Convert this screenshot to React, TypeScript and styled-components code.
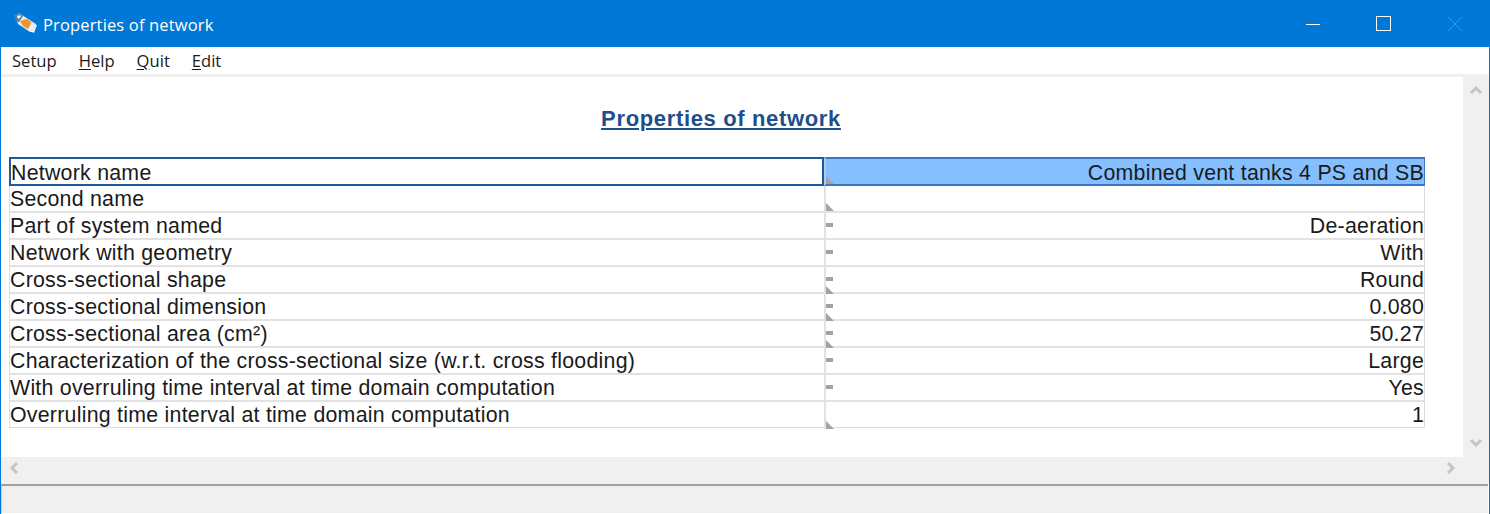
import React from 'react';
import styled, { createGlobalStyle } from 'styled-components';

type Marker = 'triangle' | 'dash' | 'both';

interface PropertyRow {
  label: string;
  value: string;
  marker: Marker;
}

const rows: PropertyRow[] = [
  { label: 'Network name', value: 'Combined vent tanks 4 PS and SB', marker: 'triangle' },
  { label: 'Second name', value: '', marker: 'triangle' },
  { label: 'Part of system named', value: 'De-aeration', marker: 'dash' },
  { label: 'Network with geometry', value: 'With', marker: 'dash' },
  { label: 'Cross-sectional shape', value: 'Round', marker: 'both' },
  { label: 'Cross-sectional dimension', value: '0.080', marker: 'both' },
  { label: 'Cross-sectional area (cm²)', value: '50.27', marker: 'both' },
  { label: 'Characterization of the cross-sectional size (w.r.t. cross flooding)', value: 'Large', marker: 'dash' },
  { label: 'With overruling time interval at time domain computation', value: 'Yes', marker: 'dash' },
  { label: 'Overruling time interval at time domain computation', value: '1', marker: 'triangle' },
];

const GlobalStyle = createGlobalStyle`
  html, body {
    margin: 0;
    padding: 0;
    background: #ffffff;
    overflow: hidden;
  }
`;

const Window = styled.div`
  width: 1490px;
  height: 514px;
  box-sizing: border-box;
  display: flex;
  flex-direction: column;
  border-left: 1px solid #0078d7;
  border-right: 1px solid #0078d7;
  font-family: "Open Sans", "Noto Sans", sans-serif;
`;

const TitleBar = styled.div`
  height: 47px;
  flex: none;
  margin: 0 -1px;
  background: #0078d7;
  display: flex;
  align-items: center;
  color: #ffffff;
`;

const AppIcon = styled.svg`
  width: 25px;
  height: 22px;
  margin-left: 13px;
  margin-top: -2px;
  flex: none;
`;

const WindowTitle = styled.div`
  margin-left: 5px;
  margin-top: 1px;
  font-size: 16.5px;
  letter-spacing: 0.15px;
`;

const WindowButtons = styled.div`
  margin-left: auto;
  display: flex;
  height: 100%;
`;

const WindowButton = styled.div`
  width: 71px;
  display: flex;
  align-items: center;
  justify-content: center;
`;

const MenuBar = styled.div`
  height: 27px;
  flex: none;
  display: flex;
  align-items: center;
  gap: 22px;
  padding-left: 11px;
  background: #ffffff;
  font-size: 16.6px;
  color: #1a1a1a;
`;

const MenuItem = styled.span`
  u {
    text-underline-offset: 2px;
  }
`;

const MenuStrip = styled.div`
  height: 3px;
  flex: none;
  background: #f0f0f0;
`;

const ContentRow = styled.div`
  height: 380px;
  flex: none;
  display: flex;
`;

const Sheet = styled.div`
  flex: 1;
  background: #ffffff;
  padding: 28px 0 0 8px;
  font-family: "Liberation Sans", Arial, sans-serif;
`;

const SheetTitle = styled.div`
  width: 1424px;
  text-align: center;
  height: 54px;
  box-sizing: border-box;
  font-size: 22px;
  font-weight: 700;
  line-height: 28px;
  letter-spacing: 0.65px;
  color: #1f4e8c;
  text-decoration: underline;
  text-underline-offset: 2px;
`;

const Table = styled.div`
  width: 1414px;
  border-left: 1px solid #dcdcdc;
  border-right: 1px solid #dcdcdc;
  border-bottom: 1px solid #dcdcdc;
  display: flex;
  flex-direction: column;
`;

const Row = styled.div`
  display: grid;
  grid-template-columns: 814px 1fr;
  height: 27px;
  box-sizing: border-box;
  border-bottom: 2px solid #e2e2e2;
  font-size: 21.33px;
  letter-spacing: 0.25px;
  line-height: 27px;
  color: #1a1a1a;
  &:last-child {
    height: 25px;
    border-bottom: none;
  }
`;

const LabelCell = styled.div<{ $selected?: boolean }>`
  white-space: nowrap;
  overflow: hidden;
  box-sizing: border-box;
  ${p => (p.$selected ? 'border: 2px solid #1f5b99; margin: -2px 0 -2px -1px; height: 29px; line-height: 28px; background: #fff;' : '')}
`;

const ValueCell = styled.div<{ $selected?: boolean }>`
  position: relative;
  text-align: right;
  border-left: 2px solid #e2e2e2;
  white-space: nowrap;
  box-sizing: border-box;
  ${p =>
    p.$selected
      ? 'background: #85bfff; border-top: 2px solid #3a78c0; border-bottom: 2px solid #3a78c0; border-right: 1px solid #3a78c0; border-left: 2px solid #a8cdf5; margin: -2px -1px -2px 0; height: 29px; line-height: 28px;'
      : ''}
`;

const Triangle = styled.span`
  position: absolute;
  left: 0;
  bottom: 0;
  width: 8px;
  height: 8px;
  background: #a3a3a3;
  clip-path: polygon(0 0, 100% 100%, 0 100%);
`;

const Dash = styled.span`
  position: absolute;
  left: 0;
  top: 10px;
  width: 7px;
  height: 4px;
  background: #a3a3a3;
`;

const VerticalBar = styled.div`
  width: 26px;
  flex: none;
  background: #f0f0f0;
  display: flex;
  flex-direction: column;
  justify-content: space-between;
  align-items: center;
  padding: 7px 0 8px;
  box-sizing: border-box;
`;

const HorizontalBar = styled.div`
  height: 27px;
  flex: none;
  box-sizing: border-box;
  background: #f0f0f0;
  display: flex;
  justify-content: space-between;
  align-items: flex-start;
  padding: 5px 32px 0 7px;
`;

const StatusBar = styled.div`
  flex: 1;
  background: #f0f0f0;
  border-top: 2px solid #a0a0a0;
  border-left: 1px solid #c8c8c8;
  border-bottom: 1px solid #ffffff;
  margin-right: 1px;
`;

const Chevron = styled.svg`
  width: 12px;
  height: 12px;
  display: block;
  fill: none;
  stroke: #c4c4c4;
  stroke-width: 3;
`;

const renderMarker = (marker: Marker) => (
  <>
    {marker !== 'triangle' && <Dash />}
    {marker !== 'dash' && <Triangle />}
  </>
);

export default function App() {
  return (
    <>
      <GlobalStyle />
      <Window>
        <TitleBar>
          <AppIcon viewBox="0 0 25 22">
            <path d="M2 4 L6 1 L9 3 L23 12 L21 20 L17 20 L5 12 Z" fill="#dfe8f0" />
            <path d="M7 9 L14 7 L19 11 L15 17 L10 14 Z" fill="#f0932b" />
            <path d="M1 5 L6 1 L10 4 L6 10 L3 9 Z" fill="#4f7aa0" />
            <path d="M18 11 L24 13 L21 21 L15 18 Z" fill="#e6edf3" />
            <path d="M4 4 L7 3 L8 5 L5 7 Z" fill="#f6f8fa" />
          </AppIcon>
          <WindowTitle>Properties of network</WindowTitle>
          <WindowButtons>
            <WindowButton>
              <svg width="16" height="16" viewBox="0 0 16 16">
                <path d="M1 8.5 H15" stroke="#ffffff" strokeWidth="1" />
              </svg>
            </WindowButton>
            <WindowButton>
              <svg width="16" height="16" viewBox="0 0 16 16">
                <rect x="0.5" y="0.5" width="14" height="14" fill="none" stroke="#ffffff" strokeWidth="1" />
              </svg>
            </WindowButton>
            <WindowButton>
              <svg width="16" height="16" viewBox="0 0 16 16">
                <path d="M1 1 L15 15 M15 1 L1 15" stroke="#3f9ae5" strokeWidth="1" />
              </svg>
            </WindowButton>
          </WindowButtons>
        </TitleBar>
        <MenuBar>
          <MenuItem>Setup</MenuItem>
          <MenuItem><u>H</u>elp</MenuItem>
          <MenuItem><u>Q</u>uit</MenuItem>
          <MenuItem><u>E</u>dit</MenuItem>
        </MenuBar>
        <MenuStrip />
        <ContentRow>
          <Sheet>
            <SheetTitle>Properties of network</SheetTitle>
            <Table>
              {rows.map((row, index) => (
                <Row key={row.label}>
                  <LabelCell $selected={index === 0}>{row.label}</LabelCell>
                  <ValueCell $selected={index === 0}>
                    {row.value}
                    {renderMarker(row.marker)}
                  </ValueCell>
                </Row>
              ))}
            </Table>
          </Sheet>
          <VerticalBar>
            <Chevron viewBox="0 0 12 12"><path d="M1 9 L6 4 L11 9" /></Chevron>
            <Chevron viewBox="0 0 12 12"><path d="M1 3 L6 8 L11 3" /></Chevron>
          </VerticalBar>
        </ContentRow>
        <HorizontalBar>
          <Chevron viewBox="0 0 12 12"><path d="M9 1 L4 6 L9 11" /></Chevron>
          <Chevron viewBox="0 0 12 12"><path d="M3 1 L8 6 L3 11" /></Chevron>
        </HorizontalBar>
        <StatusBar />
      </Window>
    </>
  );
}
